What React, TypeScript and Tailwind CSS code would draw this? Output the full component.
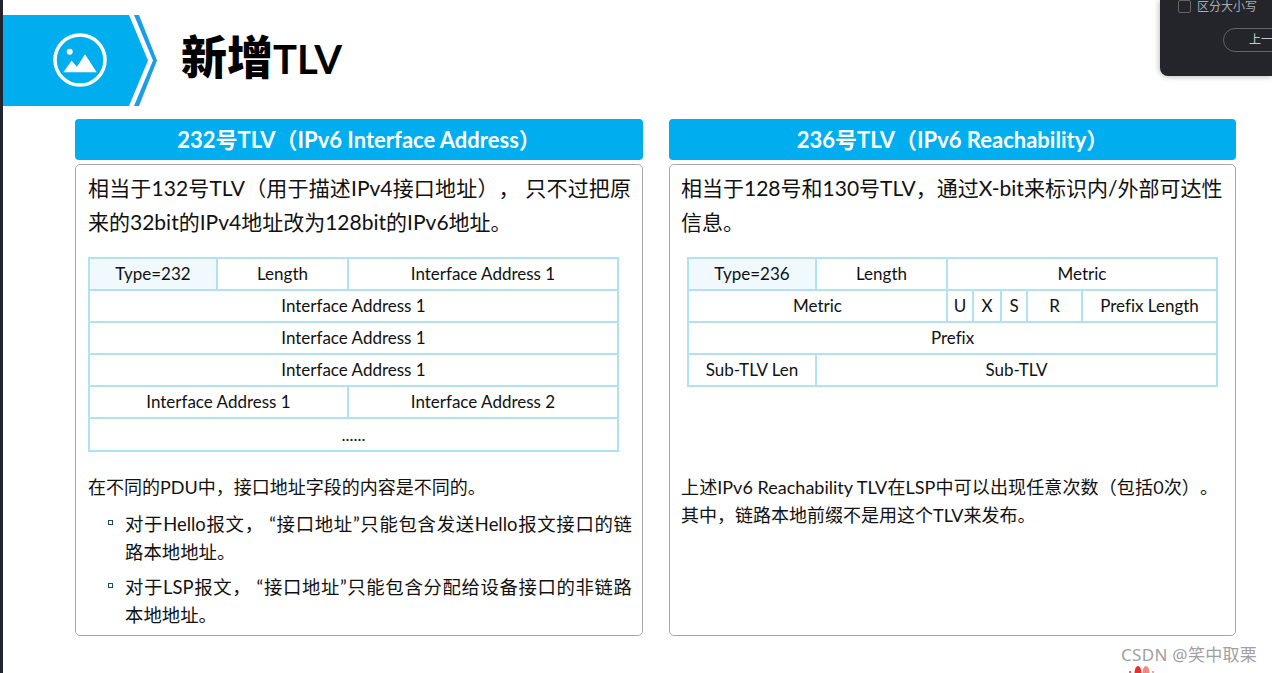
const font = { fontFamily: 'Lato, "Noto Sans CJK SC", sans-serif' }

function Banner() {
  return (
    <svg width="155" height="91" viewBox="0 0 155 91" className="shrink-0">
      <polygon points="0,0 126,0 145,45.5 126,91 0,91" fill="#00aeef" />
      <polygon points="131,0 136,0 154,45.5 136,91 131,91 150,45.5" fill="#1c9ee6" />
      <circle cx="77" cy="45" r="25" fill="none" stroke="#fff" strokeWidth="3.5" />
      <circle cx="66.7" cy="36.7" r="3" fill="#fff" />
      <path d="M60.3 57.3 L68.7 45.7 L74 51.7 L82 39.3 L93.7 57.3 Z" fill="#fff" />
    </svg>
  )
}

function Cell({ children, span, className = "" }: { children?: React.ReactNode; span?: number; className?: string }) {
  return (
    <td
      colSpan={span}
      className={`border-2 border-[#b0e2f5] text-center text-[17px] leading-[20px] text-[#111] p-0 ${className}`}
    >
      {children}
    </td>
  )
}

function CardHead({ children }: { children: React.ReactNode }) {
  return (
    <div className="h-[41px] rounded-[4px] bg-[#00aeef] text-white text-[22px] font-bold flex items-center justify-center">
      {children}
    </div>
  )
}

function Bullet({ children }: { children: React.ReactNode }) {
  return (
    <li className="flex">
      <span className="mt-[10px] ml-[20px] mr-[12px] w-[5px] h-[5px] border border-[#1a4a66] shrink-0" />
      <span className="text-[18.4px] leading-[28px] text-[#111]">{children}</span>
    </li>
  )
}

function Line({ children, className = "" }: { children: React.ReactNode; className?: string }) {
  return <span className={`block whitespace-nowrap ${className}`}>{children}</span>
}

export default function App() {
  return (
    <div className="relative w-[1272px] h-[673px] overflow-hidden bg-white border-l-[3px] border-[#1f2430] [text-spacing-trim:space-all] [font-variant-ligatures:none]" style={font}>
      {/* title */}
      <div className="flex items-center pt-[15px] h-[106px]">
        <Banner />
        <h1 className="ml-[23px] mb-[6px] text-[46px] leading-[56px] font-black text-black">
          新增<span className="text-[40px] font-bold">TLV</span>
        </h1>
      </div>

      <div className="flex gap-[26px] pl-[72px] pt-[13px]">
        {/* left card */}
        <div className="w-[568px]">
          <CardHead>232号TLV（IPv6 Interface Address）</CardHead>
          <div className="mt-[4px] h-[472px] rounded-[5px] border border-[#a6a6a6] px-[12px] pt-[6px]">
            <p className="text-[21px] leading-[34px] text-[#111]">
              <Line className="w-[543px] [text-align-last:justify]">相当于132号TLV（用于描述IPv4接口地址）， 只不过把原</Line>
              <Line>来的32bit的IPv4地址改为128bit的IPv6地址。</Line>
            </p>
            <table className="mt-[18px] w-[529px] table-fixed border-collapse">
              <colgroup>
                <col className="w-[128px]" />
                <col className="w-[131px]" />
                <col className="w-[270px]" />
              </colgroup>
              <tbody>
                <tr className="h-[32px]">
                  <Cell className="bg-[#f0f9fe]">Type=232</Cell>
                  <Cell>Length</Cell>
                  <Cell>Interface Address 1</Cell>
                </tr>
                <tr className="h-[32px]"><Cell span={3}>Interface Address 1</Cell></tr>
                <tr className="h-[32px]"><Cell span={3}>Interface Address 1</Cell></tr>
                <tr className="h-[32px]"><Cell span={3}>Interface Address 1</Cell></tr>
                <tr className="h-[32px]">
                  <Cell span={2}>Interface Address 1</Cell>
                  <Cell>Interface Address 2</Cell>
                </tr>
                <tr className="h-[33px]"><Cell span={3}>......</Cell></tr>
              </tbody>
            </table>
            <p className="mt-[21px] text-[18px] leading-[28px] text-[#111]">在不同的PDU中，接口地址字段的内容是不同的。</p>
            <ul className="mt-[9px] flex flex-col gap-[7px]">
              <Bullet>
                <Line className="w-[507px] [text-align-last:justify]">对于Hello报文， “接口地址”只能包含发送Hello报文接口的链</Line>
                <Line>路本地地址。</Line>
              </Bullet>
              <Bullet>
                <Line className="w-[507px] [text-align-last:justify]">对于LSP报文， “接口地址”只能包含分配给设备接口的非链路</Line>
                <Line>本地地址。</Line>
              </Bullet>
            </ul>
          </div>
        </div>

        {/* right card */}
        <div className="w-[567px]">
          <CardHead>236号TLV（IPv6 Reachability）</CardHead>
          <div className="mt-[4px] h-[472px] rounded-[5px] border border-[#a6a6a6] px-[11px] pt-[6px]">
            <p className="text-[21px] leading-[34px] text-[#111]">
              <Line>相当于128号和130号TLV，通过X-bit来标识内/外部可达性</Line>
              <Line>信息。</Line>
            </p>
            <table className="mt-[18px] ml-[6px] w-[529px] table-fixed border-collapse">
              <colgroup>
                <col className="w-[128px]" />
                <col className="w-[131px]" />
                <col className="w-[26px]" />
                <col className="w-[28px]" />
                <col className="w-[26px]" />
                <col className="w-[55px]" />
                <col className="w-[135px]" />
              </colgroup>
              <tbody>
                <tr className="h-[32px]">
                  <Cell className="bg-[#f0f9fe]">Type=236</Cell>
                  <Cell>Length</Cell>
                  <Cell span={5}>Metric</Cell>
                </tr>
                <tr className="h-[32px]">
                  <Cell span={2}>Metric</Cell>
                  <Cell>U</Cell>
                  <Cell>X</Cell>
                  <Cell>S</Cell>
                  <Cell>R</Cell>
                  <Cell>Prefix Length</Cell>
                </tr>
                <tr className="h-[32px]"><Cell span={7}>Prefix</Cell></tr>
                <tr className="h-[32px]">
                  <Cell>Sub-TLV Len</Cell>
                  <Cell span={6}>Sub-TLV</Cell>
                </tr>
              </tbody>
            </table>
            <p className="mt-[86px] text-[18px] leading-[28px] text-[#111]">
              <Line className="w-[537px] [text-align-last:justify]">上述IPv6 Reachability TLV在LSP中可以出现任意次数（包括0次）。</Line>
              <Line>其中，链路本地前缀不是用这个TLV来发布。</Line>
            </p>
          </div>
        </div>
      </div>

      {/* search popup */}
      <div className="absolute top-0 right-0 w-[112px] h-[76px] bg-[#24252b] rounded-bl-[8px] shadow-[0_0_6px_rgba(0,0,0,0.35)] overflow-hidden">
        <div className="flex items-center ml-[18px] gap-[6px] h-[13px]">
          <span className="w-[13px] h-[13px] rounded-[2px] border border-[#666]" />
          <span className="text-[12px] leading-[13px] text-[#a9acb3] whitespace-nowrap">区分大小写</span>
        </div>
        <div className="ml-[63px] mt-[15px] w-[80px] h-[24px] rounded-full border border-[#666] text-[12px] text-[#c9c9c9] pl-[25px] leading-[22px] whitespace-nowrap">
          上一
        </div>
      </div>

      {/* watermark */}
      <div className="absolute left-[1118px] top-[644px] text-[17px] leading-[22px] tracking-[0.3px] text-[#a0a0a0] whitespace-nowrap" style={{ fontFamily: '"Noto Sans", "Noto Sans CJK SC", sans-serif' }}>
        CSDN @笑中取栗
      </div>

      {/* logo top, cut by the window edge */}
      <svg width="30" height="8" viewBox="0 0 30 8" className="absolute left-[1124px] top-[665px]">
        <ellipse cx="11" cy="8" rx="3.5" ry="7" fill="#e8312f" />
        <ellipse cx="19" cy="8" rx="3.5" ry="7" fill="#f08a80" />
        <circle cx="3" cy="7" r="1" fill="#e8312f" />
        <circle cx="26" cy="7" r="1" fill="#f08a80" />
      </svg>
    </div>
  )
}
